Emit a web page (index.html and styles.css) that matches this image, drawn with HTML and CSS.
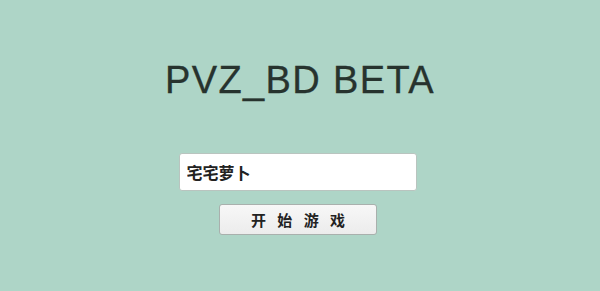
FILE: index.html
```html
<!DOCTYPE html>
<html lang="zh">
<head>
<meta charset="utf-8">
<link rel="stylesheet" href="styles.css">
</head>
<body>
<main class="screen">
  <h1 class="title">PVZ_BD BETA</h1>
  <form class="login">
    <input class="name" type="text" value="宅宅萝卜">
    <button class="start" type="button">开 始 游 戏</button>
  </form>
</main>
</body>
</html>
```
FILE: styles.css
```css
html, body {
  margin: 0;
  padding: 0;
  background: #aed5c7;
}
.screen {
  width: 600px;
  height: 291px;
  display: flex;
  flex-direction: column;
  align-items: center;
  font-family: "Liberation Sans", "Noto Sans CJK SC", sans-serif;
}
.title {
  margin: 56px 0 0;
  font-size: 38px;
  font-weight: normal;
  line-height: 48px;
  color: #27332e;
  letter-spacing: 1.4px;
  padding-left: 0;
  -webkit-text-stroke: 0.3px #27332e;
}
.login {
  margin-top: 49px;
  display: flex;
  flex-direction: column;
  align-items: center;
}
.name {
  box-sizing: border-box;
  width: 238px;
  height: 38px;
  margin-left: -5px;
  padding: 0 7px;
  border: 1px solid #b9c4bf;
  border-radius: 3px;
  background: #ffffff;
  font-family: "Noto Sans CJK SC", sans-serif;
  font-size: 16px;
  font-weight: 700;
  color: #222;
  outline: none;
}
.start {
  box-sizing: border-box;
  margin-top: 13px;
  margin-left: -5px;
  width: 158px;
  height: 31px;
  padding: 0 0 0 4px;
  border: 1px solid #a9b0ad;
  border-radius: 3px;
  background: linear-gradient(#f7f7f7, #ececec);
  font-family: "Noto Sans CJK SC", sans-serif;
  font-size: 15px;
  font-weight: 700;
  color: #222;
  letter-spacing: 3px;
  word-spacing: 2px;
}
```
